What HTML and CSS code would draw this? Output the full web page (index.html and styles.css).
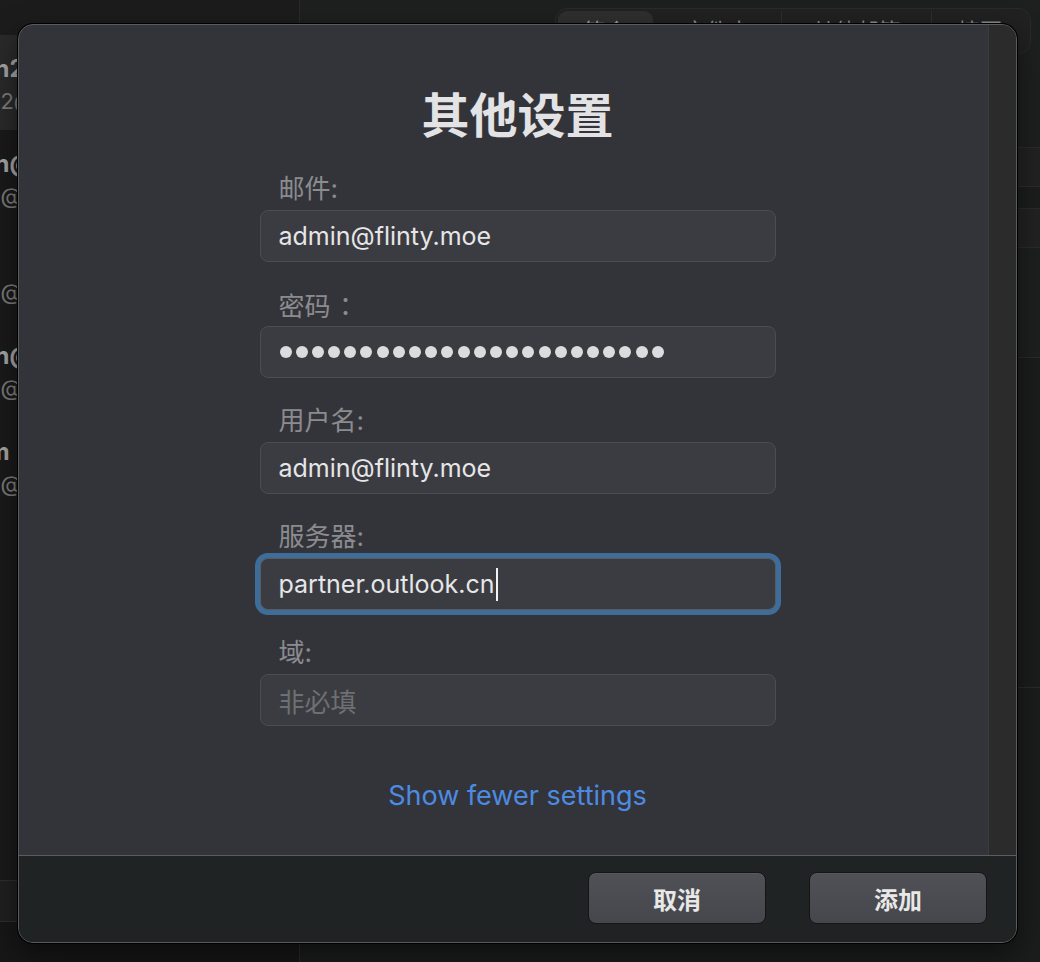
FILE: index.html
```html
<!DOCTYPE html>
<html lang="zh">
<head>
<meta charset="utf-8">
<title>其他设置</title>
<link rel="stylesheet" href="styles.css">
</head>
<body>
<div class="app">
  <aside class="sidebar">
    <div class="side-top"></div>
    <div class="acct-list">
      <div class="acct sel">
        <div class="name">admin2</div>
        <div class="mail">admin2@flinty.moe</div>
      </div>
      <div class="acct">
        <div class="name">admin@flinty.moe</div>
        <div class="mail">admin@flinty.moe</div>
      </div>
      <div class="acct">
        <div class="name">QQ</div>
        <div class="mail">admin@qq.com</div>
      </div>
      <div class="acct">
        <div class="name">admin@outlook.cn</div>
        <div class="mail">admin@outlook.cn</div>
      </div>
      <div class="acct">
        <div class="name">Lustm</div>
        <div class="mail">admin@flinty.moe</div>
      </div>
    </div>
    <div class="side-bar"></div>
    <div class="side-bottom"></div>
  </aside>
  <main class="main">
    <div class="toolbar">
      <div class="seg">
        <span class="tab on">简介</span>
        <span class="tab">文件夹</span>
        <span class="tab sep">其他邮箱</span>
        <span class="tab sep">摘要</span>
      </div>
    </div>
    <div class="band b1"></div>
    <div class="band b2"></div>
    <div class="band b3"></div>
    <div class="band b4"></div>
    <div class="band b5"></div>
    <div class="band b6"></div>
  </main>
</div>

<div class="dialog">
  <div class="dlg-body">
    <div class="content">
      <h1 class="title">其他设置</h1>
      <form class="form">
        <div class="group">
          <div class="label">邮件:</div>
          <div class="field">admin@flinty.moe</div>
        </div>
        <div class="group">
          <div class="label">密码<span class="fw" lang="zh-Hant">：</span></div>
          <div class="field dots">
            <i></i><i></i><i></i><i></i><i></i><i></i><i></i><i></i><i></i><i></i><i></i><i></i><i></i><i></i><i></i><i></i><i></i><i></i><i></i><i></i><i></i><i></i><i></i><i></i>
          </div>
        </div>
        <div class="group">
          <div class="label">用户名:</div>
          <div class="field">admin@flinty.moe</div>
        </div>
        <div class="group">
          <div class="label">服务器:</div>
          <div class="field focus">partner.outlook.cn<span class="caret"></span></div>
        </div>
        <div class="group">
          <div class="label">域:</div>
          <div class="field placeholder">非必填</div>
        </div>
      </form>
      <a class="link">Show fewer settings</a>
    </div>
    <div class="scroll"></div>
  </div>
  <div class="footer">
    <button class="btn" type="button">取消</button>
    <button class="btn" type="button">添加</button>
  </div>
</div>
</body>
</html>
```

FILE: styles.css
```css
* { box-sizing: border-box; }
html, body {
  margin: 0;
  padding: 0;
  width: 1040px;
  height: 962px;
  overflow: hidden;
  background: #1c1c1c;
  font-family: Inter, "Noto Sans CJK SC", sans-serif;
}

/* ---------- background app (window extends past the left screen edge) ---------- */
.app {
  display: flex;
  width: 1120px;
  height: 962px;
  margin-left: -80px;
}
.sidebar {
  width: 380px;
  display: flex;
  flex-direction: column;
  background: #1a1a1a;
  border-right: 1px solid #2a2a2a;
}
.side-top { height: 35px; background: #1c1c1c; }
.acct-list { flex: 1; }
.acct {
  height: 96px;
  padding: 17px 0 0 17px;
  white-space: nowrap;
  overflow: hidden;
}
.acct.sel { height: 95px; background: #2a2a2a; }
.name {
  height: 33px;
  line-height: 33px;
  font-size: 24px;
  font-weight: 700;
  color: #a5a5a5;
}
.mail {
  height: 33px;
  line-height: 33px;
  font-size: 22px;
  color: #7d7d7d;
}
.side-bar {
  height: 42px;
  background: #202020;
  border-top: 1px solid #2f2f2f;
  border-bottom: 1px solid #2f2f2f;
}
.side-bottom { height: 40px; background: #171717; }

.main {
  flex: 1;
  display: flex;
  flex-direction: column;
  background: #1e1f1f;
}
.toolbar {
  height: 147px;
  padding: 8px 0 0 255px;
}
.seg {
  display: flex;
  height: 46px;
  width: 476px;
  padding: 2px;
  background: #212121;
  border: 1px solid #2a2a2a;
  border-radius: 12px;
}
.tab {
  height: 40px;
  line-height: 40px;
  font-size: 22px;
  color: #8a8a8a;
  text-align: center;
  flex: none;
}
.tab:nth-child(1) { width: 95px; }
.tab:nth-child(2) { width: 128px; }
.tab:nth-child(3) { width: 150px; }
.tab:nth-child(4) { flex: 1; }
.tab.on { background: #2f2f2f; border-radius: 9px; color: #9a9a9a; }
.tab.sep { border-left: 1px solid #2e2e2e; }
.band { border-top: 1px solid #2b2b2b; }
.b1 { height: 39px; background: #222222; }
.b2 { height: 22px; background: #1c1d1d; }
.b3 { height: 39px; background: #222222; }
.b4 { height: 110px; background: #1e1f1f; }
.b5 { height: 330px; background: #1b1c1c; }
.b6 { flex: 1; background: #1b1c1c; }

/* ---------- dialog ---------- */
.dialog {
  position: absolute;
  left: 18px;
  top: 24px;
  width: 999px;
  height: 919px;
  border: 1px solid #5a5b5e;
  border-radius: 15px;
  box-shadow: 0 0 0 1px #000, 0 12px 30px rgba(0, 0, 0, 0.5);
  background: #333439;
  overflow: hidden;
  display: flex;
  flex-direction: column;
}
.dlg-body {
  flex: 1;
  display: flex;
  min-height: 0;
}
.content {
  flex: 1;
  padding: 59px 0 0 28px;
  display: flex;
  flex-direction: column;
  align-items: center;
}
.scroll {
  width: 28px;
  background: #2b2b2b;
  border-left: 1px solid #3c3c3c;
}
.title {
  margin: 0 0 32px;
  font-size: 48px;
  line-height: 56px;
  font-weight: 700;
  color: #e3e3e5;
  font-family: "Noto Sans CJK SC", sans-serif;
}
.form {
  width: 516px;
  display: flex;
  flex-direction: column;
  gap: 26px;
}
.label {
  height: 34px;
  line-height: 34px;
  margin-bottom: 4px;
  padding-left: 19px;
  font-size: 26px;
  color: #8b8b90;
}
.label .fw {
  display: inline-block;
  width: 30px;
  text-align: center;
  font-family: "Noto Sans CJK TC", sans-serif;
  font-feature-settings: "fwid" 0;
}
.field {
  height: 52px;
  border: 1px solid #4c4d52;
  border-radius: 8px;
  background: #3b3c41;
  padding: 0 18px;
  display: flex;
  align-items: center;
  font-size: 25px;
  color: #e6e6e8;
  white-space: nowrap;
}
.field.focus {
  border-color: #5a5b60;
  box-shadow: 0 0 0 5px #3f6d99;
}
.caret {
  display: inline-block;
  width: 2px;
  height: 33px;
  margin-left: 2px;
  background: #f2f2f2;
}
.field.placeholder { color: #6e6f73; font-size: 26px; }
.dots { gap: 4.2px; padding-left: 19px; }
.dots i {
  display: block;
  width: 12px;
  height: 12px;
  border-radius: 50%;
  background: #dcdcdf;
  flex: none;
}
.link {
  margin-top: 54px;
  font-size: 27px;
  line-height: 32px;
  color: #4d8be3;
  cursor: pointer;
}

.footer {
  height: 87px;
  border-top: 1px solid #5b5c5e;
  background: #1f2323;
  display: flex;
  justify-content: flex-end;
  align-items: center;
  gap: 43px;
  padding: 0 29px 2px 0;
}
.btn {
  width: 178px;
  height: 52px;
  border: 1px solid #141515;
  border-radius: 8px;
  background: linear-gradient(#505157, #46474c);
  box-shadow: inset 0 1px 0 rgba(255, 255, 255, 0.05);
  color: #e8e8e8;
  font-family: "Noto Sans CJK SC", sans-serif;
  font-size: 24px;
  font-weight: 700;
  padding: 0;
}
```
